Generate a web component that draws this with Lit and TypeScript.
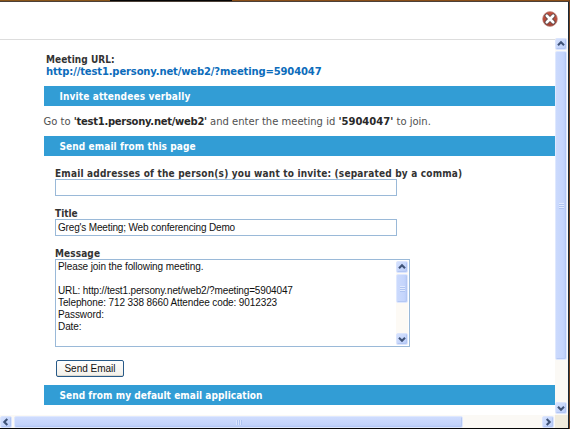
import { LitElement, html, css, svg } from "lit";
import { customElement, property } from "lit/decorators.js";
import { classMap } from "lit/directives/class-map.js";

const ARROWS: Record<string, string> = {
  up: "M3 7.3 L6 4.3 L9 7.3",
  down: "M3 4.7 L6 7.7 L9 4.7",
  left: "M7.3 3 L4.3 6 L7.3 9",
  right: "M4.7 3 L7.7 6 L4.7 9",
};

@customElement("scroll-arrow")
class ScrollArrow extends LitElement {
  @property() direction = "up";
  static styles = css`
    :host { display: block; flex: none; width: 12px; height: 12px; }
    .face {
      box-sizing: border-box; width: 12px; height: 12px;
      border: 1px solid #dbe5fd; border-radius: 2px;
      background: linear-gradient(135deg, #d5e1fe, #bacdf8);
      box-shadow: inset -1px -1px 0 #b3c6f3;
    }
    svg { display: block; margin: -1px; }
    path { fill: none; stroke: #3e5277; stroke-width: 2.1; }
  `;
  render() {
    return html`<div class="face"><svg width="12" height="12">${svg`<path d=${ARROWS[this.direction]} />`}</svg></div>`;
  }
}

@customElement("scroll-thumb")
class ScrollThumb extends LitElement {
  @property({ type: Boolean }) horizontal = false;
  static styles = css`
    :host { display: block; flex: none; }
    .thumb {
      box-sizing: border-box; width: 100%; height: 100%;
      display: flex; align-items: center; justify-content: center;
      border: 1px solid #dfe8fe; border-radius: 2px;
      background: linear-gradient(90deg, #cbdafd, #c5d5fc 70%, #b9ccf7);
      box-shadow: inset -1px -1px 0 #b5c8f4;
    }
    .horizontal { background: linear-gradient(#cfdcfe, #c4d4fb 70%, #b9ccf7); }
    .grip { width: 5px; height: 6px; background: repeating-linear-gradient(#e1eafe 0 1px, #b0c5f2 1px 2px); }
    .horizontal .grip { width: 6px; height: 5px; background: repeating-linear-gradient(90deg, #d9e4fe 0 1px, #b0c5f2 1px 2px); }
  `;
  render() {
    return html`<div class=${classMap({ thumb: true, horizontal: this.horizontal })}><span class="grip"></span></div>`;
  }
}

@customElement("app-root")
class AppRoot extends LitElement {
  static styles = css`
    :host {
      display: block; width: 570px; height: 429px; overflow: hidden;
      font-family: "DejaVu Sans", Verdana, sans-serif; font-size: 10px; line-height: 12px; color: #333;
      background: #060606;
    }
    * { box-sizing: border-box; }
    .page { display: flex; flex-direction: column; height: 429px; border-right: 1px solid #70401d; }
    .strip { height: 2px; flex: none; border-bottom: 1px solid #4c4038; background: linear-gradient(90deg, #8a5518 0 110px, #050505 110px 232px, #8a4e17 232px); }
    .window { display: flex; flex-direction: column; height: 426px; background: #fff; border-right: 1px solid #182838; }
    .header { height: 36px; flex: none; display: flex; justify-content: flex-end; padding: 9px 10px 0 0; }
    .close { width: 16px; height: 16px; display: block; }
    .body { height: 390px; display: grid; grid-template: 377px 13px / 555px 13px; }
    .content { border-top: 1px solid #ddd; margin-top: 1px; padding: 14px 0 0 43px; overflow: hidden; white-space: nowrap; }
    .v, .h { display: flex; background: #fbf9f5; }
    .v { flex-direction: column; justify-content: space-between; padding: 0 1px 1px 0; }
    .v .upper, .inner .upper { display: flex; flex-direction: column; gap: 1px; }
    .main-thumb { width: 12px; height: 309px; }
    .h { justify-content: space-between; padding: 1px 1px 0 0; }
    .h .lower { display: flex; gap: 2px; }
    .wide-thumb { width: 449px; height: 12px; }
    .corner { background: #f0ebdc; }
    .url { margin-left: 3px; height: 32px; }
    .url div, .label { font-weight: bold; }
    .title, .label, .bar { font-family: "DejaVu Sans Condensed", "DejaVu Sans", Verdana, sans-serif; font-stretch: 90%; }
    .title { letter-spacing: .05px; }
    .link { color: #0c6cbb; letter-spacing: -.14px; }
    .bar { height: 20px; margin-left: .5px; padding-left: 16px; line-height: 22px; font-weight: bold; color: #fff; background: #329dd5; }
    .t3 { letter-spacing: .14px; }
    .t5 { letter-spacing: .1px; }
    .t6 { letter-spacing: .19px; }
    .t9 { letter-spacing: .1px; }
    .t13 { letter-spacing: .06px; }
    .speech { height: 30px; line-height: 32px; padding-left: .5px; color: #505050; }
    .speech b { color: #292929; }
    .host { letter-spacing: -.28px; }
    .code { letter-spacing: 0; }
    .form { margin-left: 12px; height: 229px; padding-top: 11px; }
    .label { height: 12px; line-height: 13px; color: #333; }
    .input { width: 342px; height: 17px; margin-bottom: 11px; border: 1px solid #9ab9d8; background: #fff; padding-left: 2px; }
    .input, .message, .button { font-family: "Liberation Sans", Arial, sans-serif; color: #111; }
    .input { line-height: 15px; letter-spacing: -.16px; }
    .message { display: flex; justify-content: space-between; width: 355px; height: 88px; border: 1px solid #9ab9d8; padding: 1px; }
    .lines { padding: 0 0 0 1px; white-space: pre; line-height: 12px; letter-spacing: -.09px; }
    .t10 { letter-spacing: -.14px; }
    .t11 { letter-spacing: -.11px; }
    .inner { width: 12px; display: flex; flex-direction: column; justify-content: space-between; background: #fdfaf5; }
    .small-thumb { width: 12px; height: 29px; }
    .button { width: 68px; height: 17px; margin: 13px 0 0 1px; border: 1px solid #285a88; border-radius: 2px; text-align: center; line-height: 16px; background: linear-gradient(#fff, #f3f0e9); box-shadow: inset 0 -1px #ddd8ce; }
  `;

  render() {
    return html`
      <div class="page">
        <div class="strip"></div>
        <div class="window">
          <div class="header">
            <svg class="close" viewBox="0 0 16 16">
              <defs><radialGradient id="red" cx=".5" cy=".35" r=".65"><stop offset="0" stop-color="#c95340"/><stop offset=".65" stop-color="#b84b39"/><stop offset="1" stop-color="#8f3a30"/></radialGradient></defs>
              <circle cx="8" cy="8" r="7.4" fill="url(#red)" stroke="#c8948c" stroke-width=".7"/>
              <path d="M4.7 4.7 11.3 11.3M11.3 4.7 4.7 11.3" stroke="#59484b" stroke-width="4.3" stroke-linecap="round"/>
              <path d="M4.8 4.8 11.2 11.2M11.2 4.8 4.8 11.2" stroke="#fff" stroke-width="2.7" stroke-linecap="round"/>
            </svg>
          </div>
          <div class="body">
            <div class="content">
              <div class="url"><div class="title">Meeting URL:</div><div class="link">http://test1.persony.net/web2/?meeting=5904047</div></div>
              <div class="bar"><span class="t3">Invite attendees verbally</span></div>
              <div class="speech">Go to <b class="host">'test1.persony.net/web2'</b> and enter the meeting id <b class="code">'5904047'</b> to join.</div>
              <div class="bar"><span class="t5">Send email from this page</span></div>
              <div class="form">
                <div class="label"><span class="t6">Email addresses of the person(s) you want to invite: (separated by a comma)</span></div>
                <div class="input"></div>
                <div class="label">Title</div>
                <div class="input">Greg's Meeting; Web conferencing Demo</div>
                <div class="label"><span class="t9">Message</span></div>
                <div class="message">
                  <div class="lines">Please join the following meeting.

<span class="t10">URL: http://test1.persony.net/web2/?meeting=5904047</span>
<span class="t11">Telephone: 712 338 8660 Attendee code: 9012323</span>
Password:
Date:</div>
                  <div class="inner">
                    <div class="upper"><scroll-arrow direction="up"></scroll-arrow><scroll-thumb class="small-thumb"></scroll-thumb></div>
                    <scroll-arrow direction="down"></scroll-arrow>
                  </div>
                </div>
                <div class="button">Send Email</div>
              </div>
              <div class="bar"><span class="t13">Send from my default email application</span></div>
            </div>
            <div class="v">
              <div class="upper"><scroll-arrow direction="up"></scroll-arrow><scroll-thumb class="main-thumb"></scroll-thumb></div>
              <scroll-arrow direction="down"></scroll-arrow>
            </div>
            <div class="h">
              <div class="lower"><scroll-arrow direction="left"></scroll-arrow><scroll-thumb class="wide-thumb" horizontal></scroll-thumb></div>
              <scroll-arrow direction="right"></scroll-arrow>
            </div>
            <div class="corner"></div>
          </div>
        </div>
      </div>`;
  }
}
